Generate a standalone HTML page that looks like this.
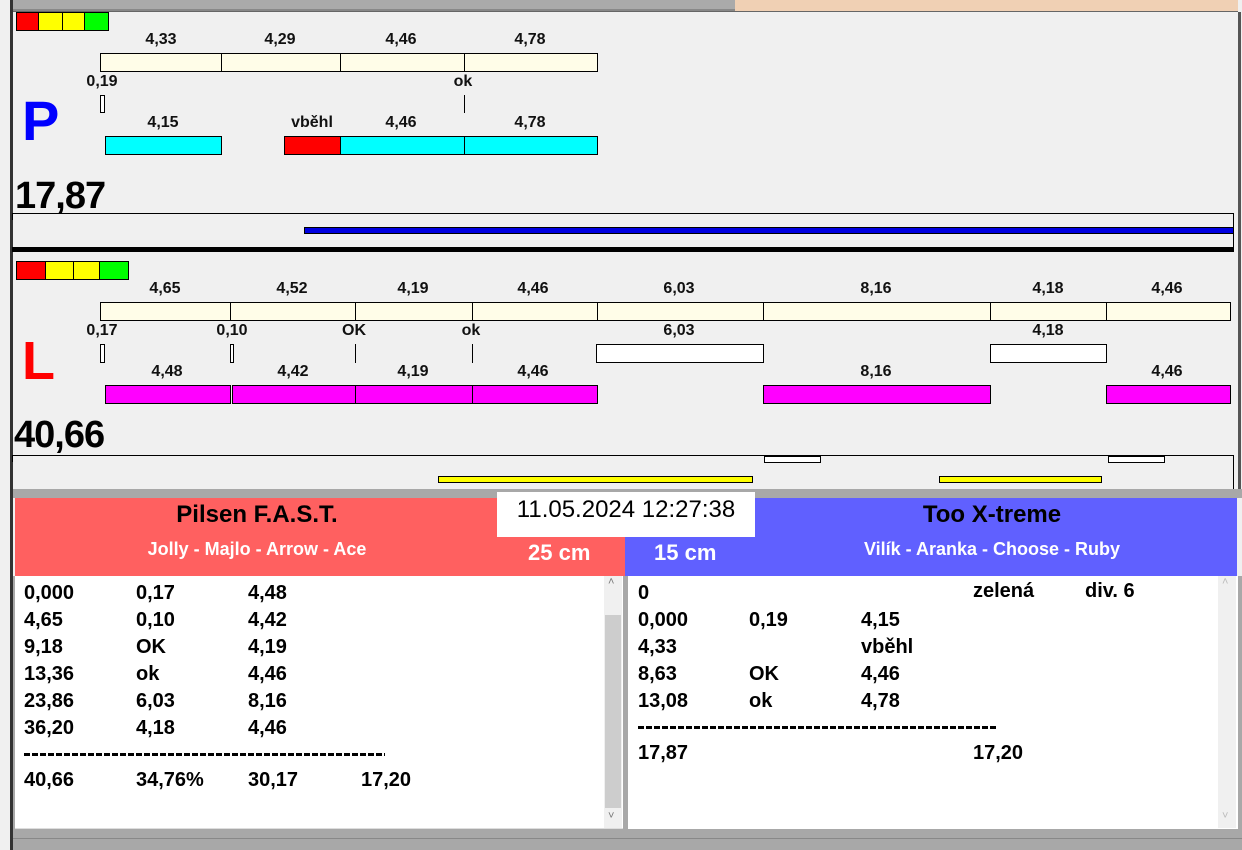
<!DOCTYPE html>
<html><head><meta charset="utf-8"><style>
*{margin:0;padding:0;box-sizing:border-box}
body{width:1242px;height:850px;overflow:hidden;background:#f0f0f0;position:relative;font-family:"Liberation Sans",Arial,sans-serif}
div{position:absolute}
.b{border:1px solid #000}
.cr{background:#fffde8}
.cy{background:#00ffff}
.mg{background:#ff00ff}
.rd{background:#ff0000}
.ye{background:#ffff00}
.gr{background:#00ff00}
.wh{background:#fff}
.lb{font-weight:bold;font-size:16px;width:100px;text-align:center;line-height:18px;color:#111}
.t{font-weight:bold;font-size:20px;line-height:22px;color:#000;white-space:nowrap}
.d{height:3px;background:repeating-linear-gradient(90deg,#000 0 6px,transparent 6px 8px)}
</style></head><body>
<div style="left:0;top:0;width:1242px;height:12px;background:#f0f0f0"></div>
<div style="left:13px;top:0;width:722px;height:9px;background:#aaa"></div>
<div style="left:13px;top:9px;width:722px;height:2px;background:#888"></div>
<div style="left:735px;top:0;width:503px;height:12px;background:#f0d0b4"></div>
<div style="left:10px;top:0;width:3px;height:850px;background:#333"></div>
<div style="left:1238px;top:12px;width:3px;height:478px;background:#555"></div>
<div style="left:13px;top:11px;width:1225px;height:1px;background:#666"></div>

<div class="b rd" style="left:16px;top:12px;width:23px;height:19px"></div>
<div class="b ye" style="left:38px;top:12px;width:25px;height:19px"></div>
<div class="b ye" style="left:62px;top:12px;width:23px;height:19px"></div>
<div class="b gr" style="left:84px;top:12px;width:25px;height:19px"></div>

<div class="lb" style="left:111px;top:31px">4,33</div>
<div class="lb" style="left:230px;top:31px">4,29</div>
<div class="lb" style="left:351px;top:31px">4,46</div>
<div class="lb" style="left:480px;top:31px">4,78</div>
<div class="b cr" style="left:100px;top:53px;width:122px;height:19px"></div>
<div class="b cr" style="left:221px;top:53px;width:120px;height:19px"></div>
<div class="b cr" style="left:340px;top:53px;width:125px;height:19px"></div>
<div class="b cr" style="left:464px;top:53px;width:134px;height:19px"></div>
<div class="lb" style="left:52px;top:73px">0,19</div>
<div class="lb" style="left:413px;top:73px">ok</div>
<div class="b wh" style="left:100px;top:95px;width:5px;height:18px"></div>
<div style="left:464px;top:95px;width:1px;height:18px;background:#000"></div>
<div style="left:22px;top:86px;font-size:56px;font-weight:bold;color:#0000ff;line-height:70px">P</div>
<div class="lb" style="left:113px;top:114px">4,15</div>
<div class="lb" style="left:262px;top:114px">vběhl</div>
<div class="lb" style="left:351px;top:114px">4,46</div>
<div class="lb" style="left:480px;top:114px">4,78</div>
<div class="b cy" style="left:105px;top:136px;width:117px;height:19px"></div>
<div class="b rd" style="left:284px;top:136px;width:57px;height:19px"></div>
<div class="b cy" style="left:340px;top:136px;width:125px;height:19px"></div>
<div class="b cy" style="left:464px;top:136px;width:134px;height:19px"></div>
<div style="left:15px;top:174px;font-size:38px;font-weight:bold;line-height:44px;letter-spacing:-1px">17,87</div>
<div style="left:12px;top:213px;width:1222px;height:1px;background:#000"></div>
<div style="left:12px;top:213px;width:1px;height:7px;background:#000"></div>
<div style="left:1233px;top:213px;width:1px;height:35px;background:#000"></div>
<div class="b" style="left:304px;top:227px;width:930px;height:7px;background:#0000e0"></div>
<div style="left:12px;top:247px;width:1222px;height:5px;background:#000"></div>

<div class="b rd" style="left:16px;top:261px;width:30px;height:19px"></div>
<div class="b ye" style="left:45px;top:261px;width:29px;height:19px"></div>
<div class="b ye" style="left:73px;top:261px;width:27px;height:19px"></div>
<div class="b gr" style="left:99px;top:261px;width:30px;height:19px"></div>

<div class="lb" style="left:115px;top:280px">4,65</div>
<div class="lb" style="left:242px;top:280px">4,52</div>
<div class="lb" style="left:363px;top:280px">4,19</div>
<div class="lb" style="left:483px;top:280px">4,46</div>
<div class="lb" style="left:629px;top:280px">6,03</div>
<div class="lb" style="left:826px;top:280px">8,16</div>
<div class="lb" style="left:998px;top:280px">4,18</div>
<div class="lb" style="left:1117px;top:280px">4,46</div>
<div class="b cr" style="left:100px;top:302px;width:131px;height:19px"></div>
<div class="b cr" style="left:230px;top:302px;width:126px;height:19px"></div>
<div class="b cr" style="left:355px;top:302px;width:118px;height:19px"></div>
<div class="b cr" style="left:472px;top:302px;width:126px;height:19px"></div>
<div class="b cr" style="left:597px;top:302px;width:167px;height:19px"></div>
<div class="b cr" style="left:763px;top:302px;width:228px;height:19px"></div>
<div class="b cr" style="left:990px;top:302px;width:117px;height:19px"></div>
<div class="b cr" style="left:1106px;top:302px;width:125px;height:19px"></div>
<div class="lb" style="left:52px;top:322px">0,17</div>
<div class="lb" style="left:182px;top:322px">0,10</div>
<div class="lb" style="left:304px;top:322px">OK</div>
<div class="lb" style="left:421px;top:322px">ok</div>
<div class="lb" style="left:629px;top:322px">6,03</div>
<div class="lb" style="left:998px;top:322px">4,18</div>
<div class="b wh" style="left:100px;top:344px;width:5px;height:19px"></div>
<div class="b wh" style="left:230px;top:344px;width:4px;height:19px"></div>
<div style="left:355px;top:344px;width:1px;height:19px;background:#000"></div>
<div style="left:472px;top:344px;width:1px;height:19px;background:#000"></div>
<div class="b wh" style="left:596px;top:344px;width:168px;height:19px"></div>
<div class="b wh" style="left:990px;top:344px;width:117px;height:19px"></div>
<div style="left:22px;top:330px;font-size:54px;font-weight:bold;color:#ff0000;line-height:62px">L</div>
<div class="lb" style="left:117px;top:363px">4,48</div>
<div class="lb" style="left:243px;top:363px">4,42</div>
<div class="lb" style="left:363px;top:363px">4,19</div>
<div class="lb" style="left:483px;top:363px">4,46</div>
<div class="lb" style="left:826px;top:363px">8,16</div>
<div class="lb" style="left:1117px;top:363px">4,46</div>
<div class="b mg" style="left:105px;top:385px;width:126px;height:19px"></div>
<div class="b mg" style="left:232px;top:385px;width:124px;height:19px"></div>
<div class="b mg" style="left:355px;top:385px;width:118px;height:19px"></div>
<div class="b mg" style="left:472px;top:385px;width:126px;height:19px"></div>
<div class="b mg" style="left:763px;top:385px;width:228px;height:19px"></div>
<div class="b mg" style="left:1106px;top:385px;width:125px;height:19px"></div>
<div style="left:14px;top:413px;font-size:38px;font-weight:bold;line-height:44px;letter-spacing:-1px">40,66</div>
<div style="left:12px;top:455px;width:1222px;height:1px;background:#000"></div>
<div style="left:12px;top:455px;width:1px;height:7px;background:#000"></div>
<div style="left:1233px;top:455px;width:1px;height:35px;background:#000"></div>
<div class="b wh" style="left:764px;top:456px;width:57px;height:7px"></div>
<div class="b wh" style="left:1108px;top:456px;width:57px;height:7px"></div>
<div class="b ye" style="left:438px;top:476px;width:315px;height:7px"></div>
<div class="b ye" style="left:939px;top:476px;width:163px;height:7px"></div>

<div style="left:13px;top:489px;width:1229px;height:9px;background:#a8a8a8"></div>

<div style="left:15px;top:498px;width:610px;height:78px;background:#ff6060"></div>
<div style="left:625px;top:498px;width:612px;height:78px;background:#6060ff"></div>
<div style="left:625px;top:498px;width:130px;height:39px;background:#ff6060"></div>
<div style="left:497px;top:492px;width:258px;height:45px;background:#fff"></div>
<div style="left:497px;top:495px;width:258px;text-align:center;font-size:24px;line-height:30px;color:#000">11.05.2024 12:27:38</div>
<div style="left:57px;top:500px;width:400px;text-align:center;font-size:24px;font-weight:bold;line-height:30px">Pilsen F.A.S.T.</div>
<div style="left:57px;top:538px;width:400px;text-align:center;font-size:18px;font-weight:bold;line-height:22px;color:#fff">Jolly - Majlo - Arrow - Ace</div>
<div style="left:528px;top:540px;font-size:22px;font-weight:bold;line-height:26px;color:#fff">25 cm</div>
<div style="left:654px;top:540px;font-size:22px;font-weight:bold;line-height:26px;color:#fff">15 cm</div>
<div style="left:792px;top:500px;width:400px;text-align:center;font-size:24px;font-weight:bold;line-height:30px">Too X-treme</div>
<div style="left:792px;top:538px;width:400px;text-align:center;font-size:18px;font-weight:bold;line-height:22px;color:#fff">Vilík - Aranka - Choose - Ruby</div>

<div style="left:13px;top:576px;width:1229px;height:274px;background:#a8a8a8"></div>
<div style="left:15px;top:576px;width:608px;height:253px;background:#fff;border-bottom:1px solid #ddd"></div>
<div style="left:604px;top:576px;width:18px;height:252px;background:#f0f0f0"></div>
<div style="left:605px;top:615px;width:16px;height:193px;background:#cdcdcd"></div>
<div style="left:608px;top:576px;font-size:11px;color:#777">˄</div>
<div style="left:608px;top:810px;font-size:11px;color:#777">˅</div>
<div style="left:628px;top:576px;width:610px;height:253px;background:#fff"></div>
<div style="left:1218px;top:576px;width:18px;height:252px;background:#f0f0f0"></div>
<div style="left:1222px;top:576px;font-size:11px;color:#bbb">˄</div>
<div style="left:1222px;top:810px;font-size:11px;color:#bbb">˅</div>
<div style="left:13px;top:838px;width:1229px;height:1px;background:#888"></div>

<div class="t" style="left:24px;top:580px;line-height:27px">0,000<br>4,65<br>9,18<br>13,36<br>23,86<br>36,20</div>
<div class="t" style="left:136px;top:580px;line-height:27px">0,17<br>0,10<br>OK<br>ok<br>6,03<br>4,18</div>
<div class="t" style="left:248px;top:580px;line-height:27px">4,48<br>4,42<br>4,19<br>4,46<br>8,16<br>4,46</div>
<div class="d" style="left:24px;top:753px;width:361px"></div>
<div class="t" style="left:24px;top:769px">40,66</div>
<div class="t" style="left:136px;top:769px">34,76%</div>
<div class="t" style="left:248px;top:769px">30,17</div>
<div class="t" style="left:361px;top:769px">17,20</div>

<div class="t" style="left:638px;top:580px;line-height:27px">0<br>0,000<br>4,33<br>8,63<br>13,08</div>
<div class="t" style="left:749px;top:607px;line-height:27px">0,19<br>&nbsp;<br>OK<br>ok</div>
<div class="t" style="left:861px;top:607px;line-height:27px">4,15<br>vběhl<br>4,46<br>4,78</div>
<div class="t" style="left:973px;top:580px">zelená</div>
<div class="t" style="left:1085px;top:580px">div. 6</div>
<div class="d" style="left:638px;top:726px;width:359px"></div>
<div class="t" style="left:638px;top:742px">17,87</div>
<div class="t" style="left:973px;top:742px">17,20</div>
</body></html>
